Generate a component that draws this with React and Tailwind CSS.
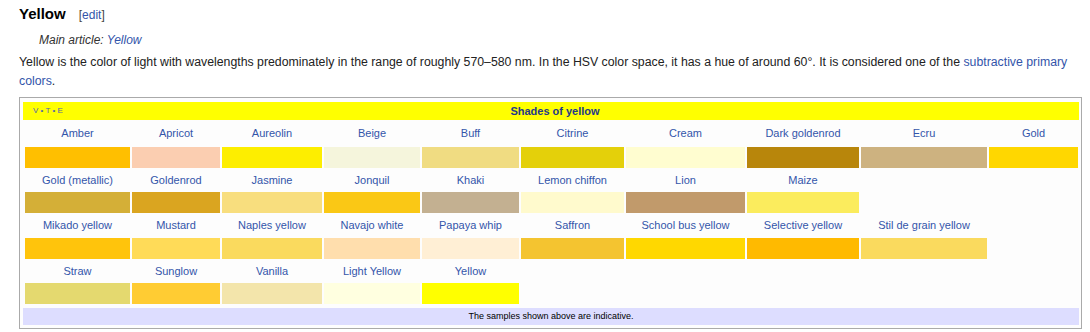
import React from 'react';

// Shades of yellow navbox, wiki section style
const ROWS = [
  { h: 'h-[27px]', items: [
    ['Amber', '#ffbf00'], ['Apricot', '#fbceb1'], ['Aureolin', '#fdee00'], ['Beige', '#f5f5dc'],
    ['Buff', '#f0dc82'], ['Citrine', '#e4d00a'], ['Cream', '#fffdd0'], ['Dark goldenrod', '#b8860b'],
    ['Ecru', '#cdb280'], ['Gold', '#ffd700'],
  ] },
  { h: 'h-[24px]', items: [
    ['Gold (metallic)', '#d4af37'], ['Goldenrod', '#daa520'], ['Jasmine', '#f8de7e'], ['Jonquil', '#fac815'],
    ['Khaki', '#c3b091'], ['Lemon chiffon', '#fffacd'], ['Lion', '#c19a6b'], ['Maize', '#fbec5d'],
  ] },
  { h: 'h-[25px]', items: [
    ['Mikado yellow', '#ffc40c'], ['Mustard', '#ffdb58'], ['Naples yellow', '#fada5e'], ['Navajo white', '#ffdead'],
    ['Papaya whip', '#ffefd5'], ['Saffron', '#f4c430'], ['School bus yellow', '#ffd800'], ['Selective yellow', '#ffba00'],
    ['Stil de grain yellow', '#fada5e'],
  ] },
  { h: 'h-[24px]', items: [
    ['Straw', '#e4d96f'], ['Sunglow', '#ffcc33'], ['Vanilla', '#f3e5ab'], ['Light Yellow', '#ffffe0'], ['Yellow', '#ffff00'],
  ] },
];

const COLS = 'grid grid-cols-[105px_88px_100px_96px_97px_103px_119px_112px_126px_89px] gap-x-[2px]';

function ShadeRow({ row }) {
  return (
    <>
      <div className={`${COLS} ${row.h}`}>
        {row.items.map(([name]) => (
          <div key={name} className="flex items-center justify-center text-[11px] leading-none text-[#3355aa] whitespace-nowrap">
            {name}
          </div>
        ))}
      </div>
      <div className={`${COLS} h-[21px]`}>
        {row.items.map(([name, color]) => (
          <div key={name} className="h-[21px]" style={{ backgroundColor: color }} />
        ))}
      </div>
    </>
  );
}

function Navbox() {
  return (
    <div className="mt-[6px] w-[1063px] h-[232px] border border-[#aaaaaa] bg-[#fdfdfd] pt-[4px] pl-[3px] pr-[2px]">
      <div className="w-[1056px] h-[18px] bg-[#ffff00] flex items-center">
        <div className="w-[60px] pl-[10px] text-[8px] leading-none text-[#5566aa] whitespace-nowrap">V • T • E</div>
        <div className="flex-1 text-center text-[11px] font-bold text-[#24398a] leading-none">Shades of yellow</div>
        <div className="w-[52px]" />
      </div>
      <div className="pl-[2px]">
        {ROWS.map((row, i) => <ShadeRow key={i} row={row} />)}
      </div>
      <div className="mt-[4px] w-[1056px] h-[17px] bg-[#ddddff] flex items-center justify-center text-[9px] leading-none text-black">
        The samples shown above are indicative.
      </div>
    </div>
  );
}

export default function App() {
  return (
    <div className="w-[1090px] h-[332px] bg-white pl-[19px] pt-[4px] font-['Liberation_Sans',Arial,sans-serif] overflow-hidden">
      <div className="flex items-baseline h-[20px] leading-[20px]">
        <span className="text-[15px] font-bold text-black">Yellow</span>
        <span className="ml-[13px] text-[12px] text-[#444]">[<a className="text-[#3355aa]">edit</a>]</span>
      </div>
      <div className="mt-[7px] pl-[20px] h-[18px] leading-[18px] text-[12px] italic text-[#333]">
        Main article: <a className="text-[#3355aa]">Yellow</a>
      </div>
      <p className="mt-[4px] w-[1060px] text-[12.3px] leading-[19px] text-[#222]">
        Yellow is the color of light with wavelengths predominately in the range of roughly 570–580 nm. In the HSV color space, it has a hue of around 60°. It is considered one of the <a className="text-[#3355aa]">subtractive primary</a>
        <br />
        <a className="text-[#3355aa]">colors</a>.
      </p>
      <Navbox />
    </div>
  );
}
